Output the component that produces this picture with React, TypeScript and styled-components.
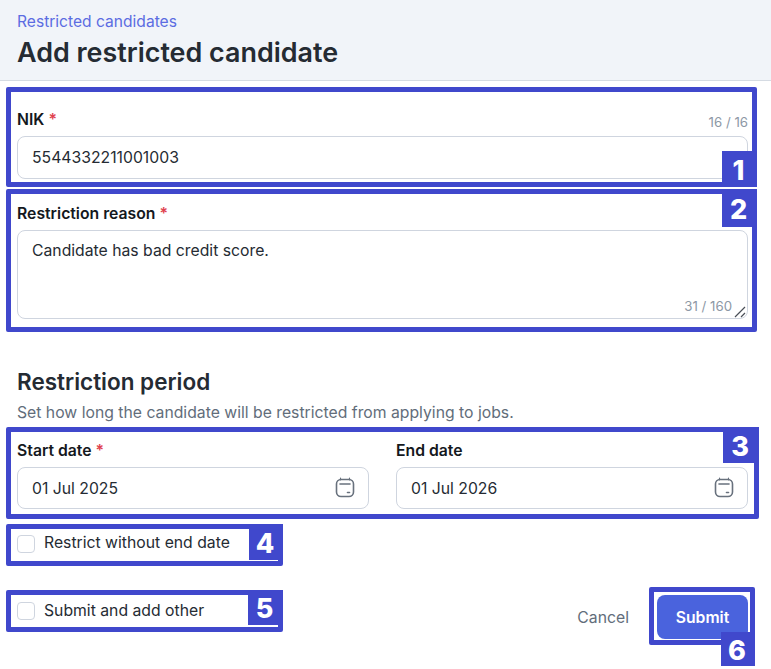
import React from "react";
import styled, { createGlobalStyle } from "styled-components";

const GlobalStyle = createGlobalStyle`
  * {
    box-sizing: border-box;
  }
  html, body {
    margin: 0;
    padding: 0;
    background: #fff;
    font-family: Inter, "Liberation Sans", sans-serif;
  }
`;

const Page = styled.div`
  position: relative;
  width: 771px;
  height: 669px;
  overflow: hidden;
  color: #252b33;
`;

const Header = styled.header`
  height: 81px;
  padding: 13px 17px 0;
  background: #f1f4f9;
  border-bottom: 1px solid #d5dbe3;
`;

const Breadcrumb = styled.a`
  display: block;
  font-size: 15.6px;
  line-height: 18px;
  color: #5c6ce2;
`;

const Title = styled.h1`
  margin: 5px 0 0;
  font-size: 26.9px;
  line-height: 32px;
  font-weight: 600;
  color: #252b33;
`;

const Form = styled.form`
  display: flex;
  flex-direction: column;
  padding: 29px 23px 0 17px;
`;

const Field = styled.div<{ $gap?: number }>`
  position: relative;
  display: flex;
  flex-direction: column;
  flex: 1;
  margin-bottom: ${(p) => p.$gap ?? 0}px;
`;

const LabelRow = styled.div<{ $height: number }>`
  display: flex;
  justify-content: space-between;
  height: ${(p) => p.$height}px;
`;

const Label = styled.label`
  font-size: 15.75px;
  line-height: 20px;
  font-weight: 600;
  color: #14181d;
`;

const Required = styled.span`
  margin-left: 4px;
  color: #e0424f;
`;

const Counter = styled.span`
  margin-top: 2px;
  font-size: 13.25px;
  line-height: 20px;
  color: #8d98a5;
`;

const TextInput = styled.input<{ $height: number }>`
  width: 100%;
  height: ${(p) => p.$height}px;
  padding: 0 14px;
  border: 1px solid #cfd5df;
  border-radius: 8px;
  background: #fff;
  font: 400 15.75px Inter, "Liberation Sans", sans-serif;
  color: #252b33;
  outline: none;
`;

const TextArea = styled.textarea`
  display: block;
  width: 100%;
  height: 89px;
  padding: 10px 14px;
  border: 1px solid #cfd5df;
  border-radius: 8px;
  background: #fff;
  font: 400 15.75px/20px Inter, "Liberation Sans", sans-serif;
  color: #252b33;
  outline: none;
  resize: none;
`;

const AreaWrap = styled.div`
  position: relative;
  height: 89px;
`;

const AreaCounter = styled.span`
  position: absolute;
  right: 16px;
  bottom: 3px;
  font-size: 13.25px;
  line-height: 20px;
  color: #8d98a5;
`;

const ResizeGrip = styled.svg`
  position: absolute;
  right: 2px;
  bottom: 1px;
  width: 12px;
  height: 12px;
`;

const SectionTitle = styled.h2`
  margin: 49px 0 0;
  font-size: 22.5px;
  line-height: 28px;
  font-weight: 600;
  color: #252b33;
`;

const SectionText = styled.p`
  margin: 7px 0 18px;
  font-size: 15.75px;
  line-height: 20px;
  color: #626d7a;
`;

const DateRow = styled.div`
  display: flex;
  gap: 27px;
`;

const DateBox = styled.div`
  position: relative;
`;

const DateIcon = styled.svg`
  position: absolute;
  top: 10px;
  right: 14px;
  width: 20px;
  height: 21px;
`;

const CheckRow = styled.label<{ $lift?: number }>`
  display: flex;
  align-items: center;
  gap: 9px;
  font-size: 15.75px;
  line-height: 18px;
  color: #252b33;
  margin-bottom: ${(p) => p.$lift ?? 0}px;
`;

const CheckText = styled.span<{ $rise?: number }>`
  margin-top: ${(p) => -(p.$rise ?? 0)}px;
`;

const Box = styled.span`
  width: 18px;
  height: 18px;
  border: 1px solid #cfd5df;
  border-radius: 4px;
  background: #fff;
`;

const TopCheck = styled.div`
  margin-top: 26px;
`;

const Footer = styled.div`
  display: flex;
  align-items: center;
  justify-content: space-between;
  margin-top: 42px;
`;

const Actions = styled.div`
  display: flex;
  align-items: center;
  gap: 28px;
`;

const CancelButton = styled.button`
  padding: 0;
  border: 0;
  background: none;
  font: 400 15.75px Inter, "Liberation Sans", sans-serif;
  color: #626d7a;
`;

const SubmitButton = styled.button`
  width: 91px;
  height: 44px;
  border: 0;
  border-radius: 8px;
  background: #4a63dd;
  font: 600 15.75px Inter, "Liberation Sans", sans-serif;
  color: #fff;
`;

const Callout = styled.div<{ $x: number; $y: number; $w: number; $h: number }>`
  position: absolute;
  left: ${(p) => p.$x}px;
  top: ${(p) => p.$y}px;
  width: ${(p) => p.$w}px;
  height: ${(p) => p.$h}px;
  border: 5px solid #4048cc;
  border-radius: 2px;
  pointer-events: none;
`;

const Badge = styled.div<{ $x: number; $y: number; $w: number; $h: number }>`
  position: absolute;
  left: ${(p) => p.$x}px;
  top: ${(p) => p.$y}px;
  width: ${(p) => p.$w}px;
  height: ${(p) => p.$h}px;
  padding: 2px 2px 0 0;
  display: flex;
  align-items: center;
  justify-content: center;
  background: #4048cc;
  font: 800 27px Inter, "Liberation Sans", sans-serif;
  color: #fff;
`;

const callouts = [
  { n: 1, x: 6, y: 87, w: 751, h: 100, bx: 722, by: 151, bw: 35, bh: 36 },
  { n: 2, x: 6, y: 189, w: 751, h: 143, bx: 722, by: 189, bw: 35, bh: 38 },
  { n: 3, x: 6, y: 427, w: 753, h: 92, bx: 723, by: 427, bw: 36, bh: 36 },
  { n: 4, x: 6, y: 524, w: 277, h: 42, bx: 249, by: 524, bw: 34, bh: 36 },
  { n: 5, x: 6, y: 590, w: 277, h: 42, bx: 248, by: 590, bw: 35, bh: 35 },
  { n: 6, x: 649, y: 587, w: 106, h: 58, bx: 721, by: 632, bw: 34, bh: 34 },
];

const CalendarGlyph = () => (
  <DateIcon viewBox="0 0 20 21" fill="none" stroke="#68717d" strokeWidth="1.6" strokeLinecap="round">
    <rect x="1.5" y="2.5" width="17" height="17" rx="4.5" />
    <path d="M5 7h10" />
    <path d="M5.5 1.2v1.6M14.5 1.2v1.6" strokeWidth="1.2" />
    <path d="M12.5 15.5h2" />
  </DateIcon>
);

function App() {
  return (
    <Page>
      <GlobalStyle />
      <Header>
        <Breadcrumb>Restricted candidates</Breadcrumb>
        <Title>Add restricted candidate</Title>
      </Header>
      <Form>
        <Field $gap={25}>
          <LabelRow $height={26}>
            <Label>
              NIK<Required>*</Required>
            </Label>
            <Counter>16 / 16</Counter>
          </LabelRow>
          <TextInput $height={43} defaultValue="5544332211001003" />
        </Field>
        <Field>
          <LabelRow $height={26}>
            <Label>
              Restriction reason<Required>*</Required>
            </Label>
          </LabelRow>
          <AreaWrap>
            <TextArea defaultValue="Candidate has bad credit score." />
            <AreaCounter>31 / 160</AreaCounter>
            <ResizeGrip viewBox="0 0 12 12" fill="none" stroke="#4a4f57" strokeWidth="1.2">
              <path d="M1 11 11 1M7 11l4-4" />
            </ResizeGrip>
          </AreaWrap>
        </Field>
        <SectionTitle>Restriction period</SectionTitle>
        <SectionText>Set how long the candidate will be restricted from applying to jobs.</SectionText>
        <DateRow>
          <Field>
            <LabelRow $height={26}>
              <Label>
                Start date<Required>*</Required>
              </Label>
            </LabelRow>
            <DateBox>
              <TextInput $height={42} defaultValue="01 Jul 2025" />
              <CalendarGlyph />
            </DateBox>
          </Field>
          <Field>
            <LabelRow $height={26}>
              <Label>End date</Label>
            </LabelRow>
            <DateBox>
              <TextInput $height={42} defaultValue="01 Jul 2026" />
              <CalendarGlyph />
            </DateBox>
          </Field>
        </DateRow>
        <TopCheck>
          <CheckRow>
            <Box />
            <CheckText $rise={2}>Restrict without end date</CheckText>
          </CheckRow>
        </TopCheck>
        <Footer>
          <CheckRow $lift={12}>
            <Box />
            <CheckText>Submit and add other</CheckText>
          </CheckRow>
          <Actions>
            <CancelButton type="button">Cancel</CancelButton>
            <SubmitButton type="button">Submit</SubmitButton>
          </Actions>
        </Footer>
      </Form>
      {callouts.map((c) => (
        <React.Fragment key={c.n}>
          <Callout $x={c.x} $y={c.y} $w={c.w} $h={c.h} />
          <Badge $x={c.bx} $y={c.by} $w={c.bw} $h={c.bh}>
            {c.n}
          </Badge>
        </React.Fragment>
      ))}
    </Page>
  );
}

export default App;
